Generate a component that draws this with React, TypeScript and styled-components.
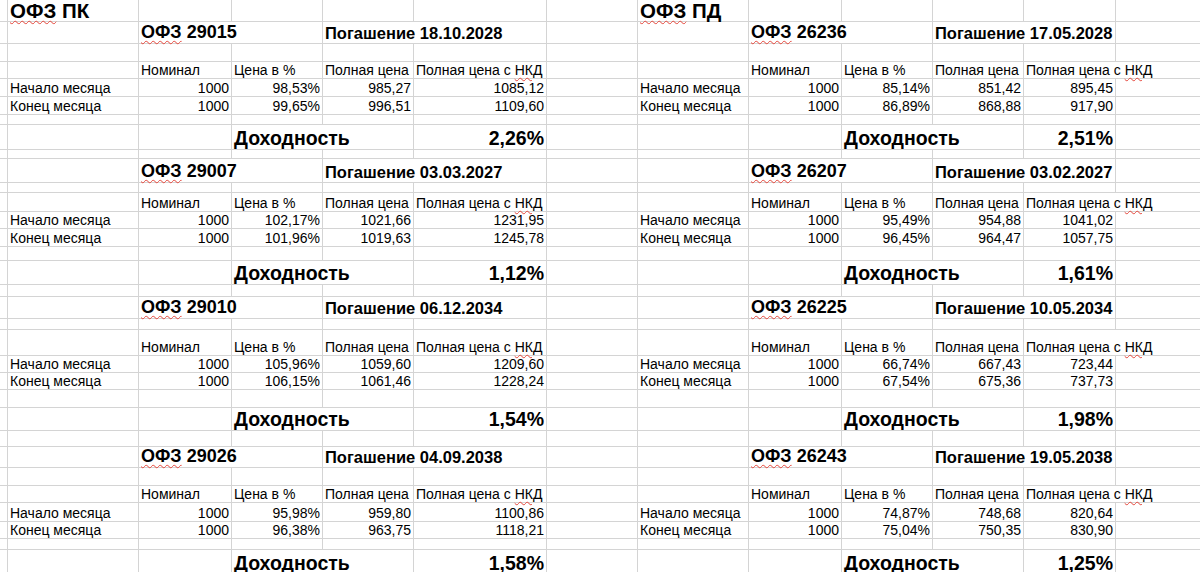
import React from 'react'
import styled, { createGlobalStyle } from 'styled-components'

const GlobalStyle = createGlobalStyle`
  html, body {
    margin: 0;
    padding: 0;
    background: #fff;
  }
  body {
    font-family: 'Liberation Sans', Arial, sans-serif;
  }
`

// column widths of the sheet, px (first is the cut-off column on the left)
const COLUMNS = [8, 131, 93, 91, 91, 133, 91, 111, 93, 91, 91, 92, 120]
// row heights, px
const ROWS = [
  22, 22, 18, 17, 18, 18, 10, 25, 9, 24, 10, 19, 17, 18, 14, 24, 12, 22, 11, 26, 17, 17, 18, 23, 16, 21, 18, 17, 19,
  17, 11, 25,
]

type Kind = 'plain' | 'code' | 'maturity' | 'yield' | 'section'

const FONT_SIZE: Record<Kind, number> = { plain: 14, code: 18, maturity: 16.5, yield: 19.5, section: 20.5 }

const Viewport = styled.div`
  width: 1200px;
  height: 572px;
  overflow: hidden;
  background: #fff;
`

const Sheet = styled.div`
  display: grid;
  grid-template-columns: ${COLUMNS.map(w => `${w}px`).join(' ')};
  grid-template-rows: ${ROWS.map(h => `${h}px`).join(' ')};
`

const Cell = styled.div<{ $span: number; $align: 'left' | 'right'; $kind: Kind }>`
  grid-column: span ${p => p.$span};
  display: flex;
  align-items: flex-end;
  justify-content: ${p => (p.$align === 'right' ? 'flex-end' : 'flex-start')};
  box-sizing: border-box;
  min-width: 0;
  padding: 0 2px;
  border-right: 1px solid #d4d4d4;
  border-bottom: 1px solid #d4d4d4;
  white-space: nowrap;
  color: #000;
  font-size: ${p => FONT_SIZE[p.$kind]}px;
  font-weight: ${p => (p.$kind === 'plain' ? 400 : 700)};
  line-height: ${p => (p.$kind === 'section' ? 1 : 1.15)};
`

const Text = styled.span`
  display: inline-block;
`

const Misspelt = styled.span`
  text-decoration: underline wavy #e5463b;
  text-decoration-thickness: 1px;
  text-underline-offset: 2px;
`

type CellDef = {
  text: React.ReactNode
  span?: number
  align?: 'left' | 'right'
  kind?: Kind
}

type Bond = {
  code: string
  maturity: string
  start: [string, string, string]
  end: [string, string, string]
  yieldValue: string
}

const sides: { base: number; title: string; nkdSpan: number; bonds: Bond[] }[] = [
  {
    base: 1,
    title: 'ПК',
    nkdSpan: 1,
    bonds: [
      { code: '29015', maturity: '18.10.2028', start: ['98,53%', '985,27', '1085,12'], end: ['99,65%', '996,51', '1109,60'], yieldValue: '2,26%' },
      { code: '29007', maturity: '03.03.2027', start: ['102,17%', '1021,66', '1231,95'], end: ['101,96%', '1019,63', '1245,78'], yieldValue: '1,12%' },
      { code: '29010', maturity: '06.12.2034', start: ['105,96%', '1059,60', '1209,60'], end: ['106,15%', '1061,46', '1228,24'], yieldValue: '1,54%' },
      { code: '29026', maturity: '04.09.2038', start: ['95,98%', '959,80', '1100,86'], end: ['96,38%', '963,75', '1118,21'], yieldValue: '1,58%' },
    ],
  },
  {
    base: 7,
    title: 'ПД',
    nkdSpan: 2,
    bonds: [
      { code: '26236', maturity: '17.05.2028', start: ['85,14%', '851,42', '895,45'], end: ['86,89%', '868,88', '917,90'], yieldValue: '2,51%' },
      { code: '26207', maturity: '03.02.2027', start: ['95,49%', '954,88', '1041,02'], end: ['96,45%', '964,47', '1057,75'], yieldValue: '1,61%' },
      { code: '26225', maturity: '10.05.2034', start: ['66,74%', '667,43', '723,44'], end: ['67,54%', '675,36', '737,73'], yieldValue: '1,98%' },
      { code: '26243', maturity: '19.05.2038', start: ['74,87%', '748,68', '820,64'], end: ['75,04%', '750,35', '830,90'], yieldValue: '1,25%' },
    ],
  },
]

const buildRows = () => {
  const rows: Record<number, CellDef>[] = ROWS.map(() => ({}))

  sides.forEach(side => {
    const b = side.base
    rows[0][b] = {
      text: (
        <>
          <Misspelt>ОФЗ</Misspelt> {side.title}
        </>
      ),
      kind: 'section',
    }

    side.bonds.forEach((bond, i) => {
      const r = 1 + i * 8
      rows[r][b + 1] = {
        text: (
          <>
            <Misspelt>ОФЗ</Misspelt> {bond.code}
          </>
        ),
        kind: 'code',
        span: 2,
      }
      rows[r][b + 3] = { text: `Погашение ${bond.maturity}`, kind: 'maturity', span: 2 }

      rows[r + 2][b + 1] = { text: 'Номинал' }
      rows[r + 2][b + 2] = { text: 'Цена в %' }
      rows[r + 2][b + 3] = { text: 'Полная цена' }
      rows[r + 2][b + 4] = {
        text: (
          <>
            Полная цена с <Misspelt>НКД</Misspelt>
          </>
        ),
        span: side.nkdSpan,
      }

      const values: [string, [string, string, string]][] = [
        ['Начало месяца', bond.start],
        ['Конец месяца', bond.end],
      ]
      values.forEach(([label, nums], k) => {
        rows[r + 3 + k][b] = { text: label }
        rows[r + 3 + k][b + 1] = { text: '1000', align: 'right' }
        nums.forEach((n, j) => {
          rows[r + 3 + k][b + 2 + j] = { text: n, align: 'right' }
        })
      })

      rows[r + 6][b + 2] = { text: 'Доходность', kind: 'yield', span: 2 }
      rows[r + 6][b + 4] = { text: bond.yieldValue, kind: 'yield', align: 'right' }
    })
  })

  return rows
}

const App: React.FC = () => {
  const rows = buildRows()

  return (
    <>
      <GlobalStyle />
      <Viewport>
        <Sheet>
          {rows.map((row, ri) => {
            const cells: React.ReactNode[] = []
            for (let c = 0; c < COLUMNS.length; ) {
              const def = row[c]
              const span = def?.span ?? 1
              cells.push(
                <Cell key={`${ri}-${c}`} $span={span} $align={def?.align ?? 'left'} $kind={def?.kind ?? 'plain'}>
                  {def && <Text>{def.text}</Text>}
                </Cell>
              )
              c += span
            }
            return cells
          })}
        </Sheet>
      </Viewport>
    </>
  )
}

export default App
